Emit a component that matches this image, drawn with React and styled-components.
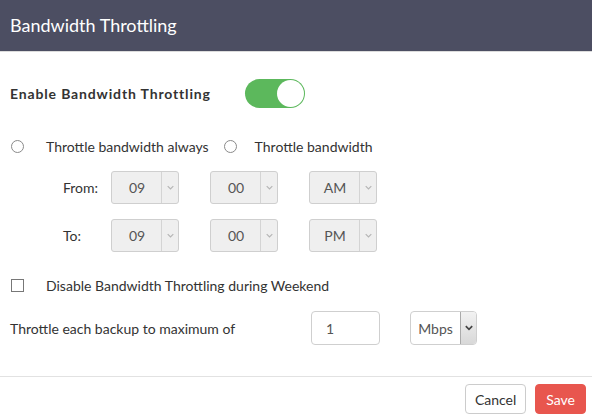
import React from "react";
import styled, { createGlobalStyle } from "styled-components";

const Global = createGlobalStyle`
  html, body { margin: 0; padding: 0; background: #fff; }
  body { font-family: Lato, "Open Sans", sans-serif; color: #333; font-size: 14px; }
  * { box-sizing: border-box; }
`;

const Modal = styled.div`
  width: 592px;
  height: 419px;
  display: flex;
  flex-direction: column;
  background: #fff;
`;

const Header = styled.div`
  height: 52px;
  background: #4c4e62;
  border-bottom: 1px solid #dcdcdc;
  display: flex;
  align-items: center;
  padding: 0 10px 2px;
  color: #fff;
  font-size: 18px;
`;

const Body = styled.div`
  flex: 1;
  display: flex;
  flex-direction: column;
  padding: 26px 10px 0;
`;

const EnableRow = styled.div`
  display: flex;
  align-items: center;
  height: 30px;
`;

const BoldLabel = styled.div`
  font-weight: 700;
  font-size: 14px;
  letter-spacing: 0.85px;
  width: 235px;
  color: #333;
`;

const Switch = styled.div`
  width: 60px;
  height: 29px;
  border-radius: 15px;
  background: #5cb85c;
  display: flex;
  justify-content: flex-end;
  align-items: center;
  padding: 1px;
`;

const Knob = styled.div`
  width: 27px;
  height: 27px;
  border-radius: 50%;
  background: #fff;
`;

const RadioRow = styled.div`
  display: flex;
  align-items: center;
  margin-top: 28px;
  height: 20px;
`;

const Radio = styled.span`
  width: 13px;
  height: 13px;
  border-radius: 50%;
  border: 1px solid #8a8a8a;
  background: #fff;
  display: inline-block;
  margin-left: 1px;
  flex: none;
`;

const OptLabel = styled.span`
  margin-left: ${(p) => p.$gap}px;
  margin-right: ${(p) => p.$after || 0}px;
  font-size: 14px;
`;

const TimeBlock = styled.div`
  display: flex;
  flex-direction: column;
  gap: 15px;
  padding-left: 53px;
  margin-top: 15px;
`;

const TimeRow = styled.div`
  display: flex;
  align-items: center;
  gap: 31px;
`;

const TimeLabel = styled.span`
  width: 17px;
  white-space: nowrap;
  font-size: 14px;
`;

const Select = styled.div`
  width: 68px;
  height: 33px;
  border: 1px solid #cfcfcf;
  border-radius: 3px;
  background: #efefef;
  display: flex;
  align-items: stretch;
  color: #555;
`;

const SelectValue = styled.div`
  flex: 1;
  display: flex;
  align-items: center;
  justify-content: center;
  font-size: 14px;
  padding-left: 1px;
`;

const Arrow = styled.div`
  width: 17px;
  border-left: 1px solid #d4d4d4;
  display: flex;
  align-items: center;
  justify-content: center;
  color: #b5b5b5;
`;

const CheckRow = styled.div`
  display: flex;
  align-items: center;
  margin-top: 25px;
  height: 16px;
`;

const Check = styled.span`
  width: 13px;
  height: 13px;
  border: 1px solid #777;
  background: #fff;
  margin-left: 1px;
  flex: none;
`;

const MaxRow = styled.div`
  display: flex;
  align-items: center;
  margin-top: 18px;
`;

const MaxLabel = styled.span`
  width: 301px;
  font-size: 14px;
`;

const NumInput = styled.div`
  width: 69px;
  height: 34px;
  border: 1px solid #cfcfcf;
  border-radius: 4px;
  display: flex;
  align-items: center;
  padding-left: 14px;
  font-size: 14px;
  color: #555;
`;

const UnitSelect = styled.div`
  margin-left: 30px;
  width: 67px;
  height: 34px;
  border: 1px solid #cfcfcf;
  border-radius: 4px;
  display: flex;
  align-items: stretch;
  overflow: hidden;
  color: #555;
`;

const UnitValue = styled.div`
  flex: 1;
  display: flex;
  align-items: center;
  justify-content: center;
  font-size: 14px;
`;

const UnitArrow = styled.div`
  width: 16px;
  border-left: 1px solid #aaa;
  background: linear-gradient(#f2f2f2, #d8d8d8);
  display: flex;
  align-items: center;
  justify-content: center;
  color: #444;
`;

const Footer = styled.div`
  height: 43px;
  border-top: 1px solid #e2e2e2;
  display: flex;
  justify-content: flex-end;
  align-items: flex-start;
  gap: 9px;
  padding: 7px 6px 0 0;
`;

const Button = styled.button`
  height: 30px;
  padding: 0 ${(p) => (p.$primary ? 10 : 9)}px;
  border-radius: 4px;
  border: 1px solid ${(p) => (p.$primary ? "#e8564e" : "#cccccc")};
  background: ${(p) => (p.$primary ? "#e8564e" : "#fff")};
  color: ${(p) => (p.$primary ? "#fff" : "#333")};
  font-family: Lato, sans-serif;
  font-size: 14px;
`;

const Chevron = ({ size = 7, w = 1.2 }) => (
  <svg width={size} height={size * 0.7} viewBox="0 0 10 7">
    <path d="M1 1.5 L5 5.5 L9 1.5" fill="none" stroke="currentColor" strokeWidth={w * 1.4} />
  </svg>
);

const TimeSelect = ({ value }) => (
  <Select>
    <SelectValue>{value}</SelectValue>
    <Arrow>
      <Chevron />
    </Arrow>
  </Select>
);

export default function App() {
  return (
    <>
      <Global />
      <Modal>
        <Header>Bandwidth Throttling</Header>
        <Body>
          <EnableRow>
            <BoldLabel>Enable Bandwidth Throttling</BoldLabel>
            <Switch>
              <Knob />
            </Switch>
          </EnableRow>
          <RadioRow>
            <Radio />
            <OptLabel $gap={22} $after={14}>Throttle bandwidth always</OptLabel>
            <Radio />
            <OptLabel $gap={18}>Throttle bandwidth</OptLabel>
          </RadioRow>
          <TimeBlock>
            <TimeRow>
              <TimeLabel>From:</TimeLabel>
              <TimeSelect value="09" />
              <TimeSelect value="00" />
              <TimeSelect value="AM" />
            </TimeRow>
            <TimeRow>
              <TimeLabel>To:</TimeLabel>
              <TimeSelect value="09" />
              <TimeSelect value="00" />
              <TimeSelect value="PM" />
            </TimeRow>
          </TimeBlock>
          <CheckRow>
            <Check />
            <OptLabel $gap={22}>Disable Bandwidth Throttling during Weekend</OptLabel>
          </CheckRow>
          <MaxRow>
            <MaxLabel>Throttle each backup to maximum of</MaxLabel>
            <NumInput>1</NumInput>
            <UnitSelect>
              <UnitValue>Mbps</UnitValue>
              <UnitArrow>
                <Chevron size={8} w={1.5} />
              </UnitArrow>
            </UnitSelect>
          </MaxRow>
        </Body>
        <Footer>
          <Button>Cancel</Button>
          <Button $primary>Save</Button>
        </Footer>
      </Modal>
    </>
  );
}
